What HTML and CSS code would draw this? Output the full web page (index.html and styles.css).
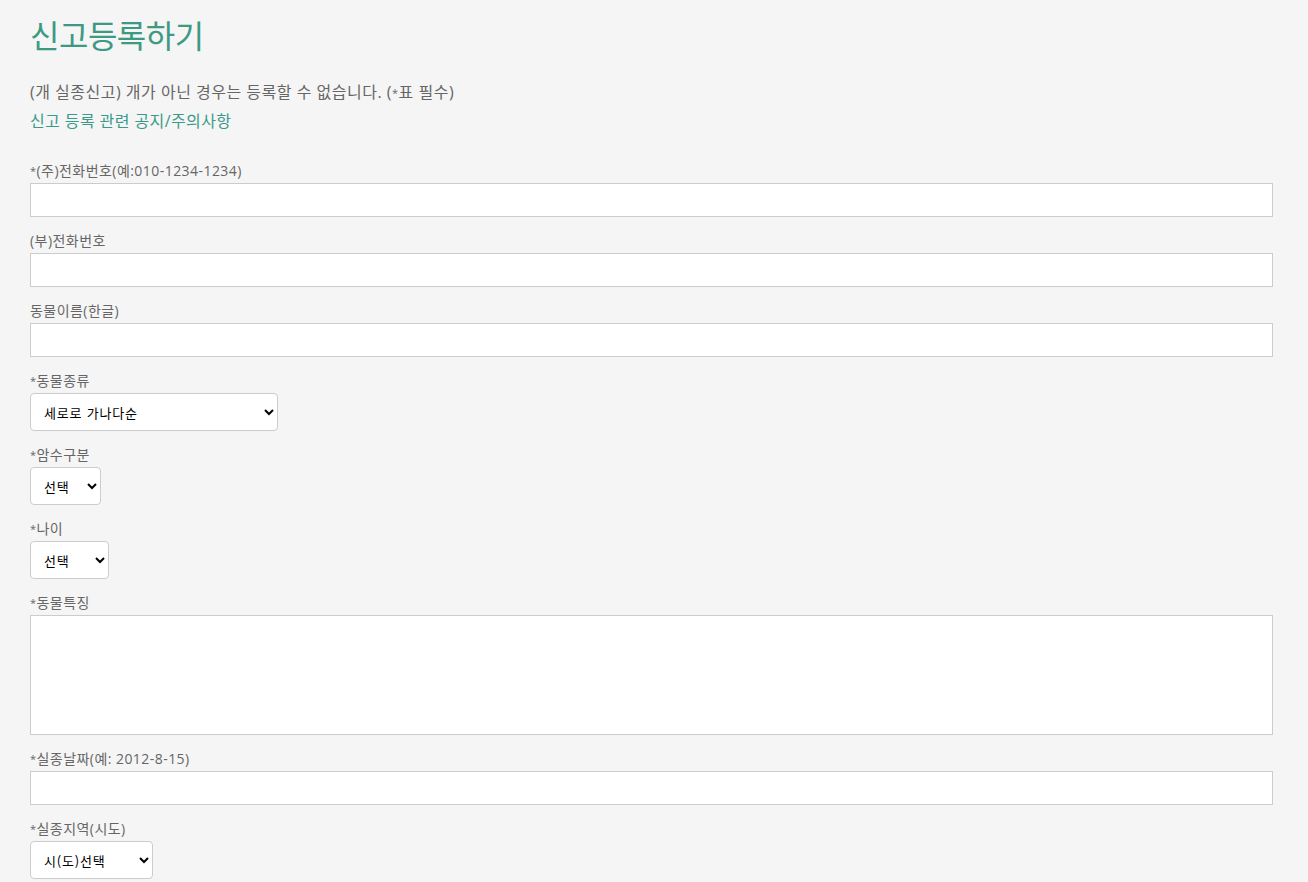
FILE: index.html
```html
<!DOCTYPE html>
<html lang="ko">
<head>
    <meta charset="UTF-8">
    <meta name="viewport" content="width=device-width, initial-scale=1.0">
    <title>신고등록하기</title>
    <link rel="stylesheet" href="styles.css">
</head>
<body>
    <div class="wrap">
        <h1>신고등록하기</h1>
        <p class="notice">(개 실종신고) 개가 아닌 경우는 등록할 수 없습니다. (<span class="star">*</span>표 필수)</p>
        <a class="link" href="#">신고 등록 관련 공지/주의사항</a>

        <form class="form">
            <div class="field">
                <label><span class="star">*</span>(주)전화번호(예:010-1234-1234)</label>
                <input type="text" class="text">
            </div>
            <div class="field">
                <label>(부)전화번호</label>
                <input type="text" class="text">
            </div>
            <div class="field">
                <label>동물이름(한글)</label>
                <input type="text" class="text">
            </div>
            <div class="field">
                <label><span class="star">*</span>동물종류</label>
                <select class="sel sel-kind">
                    <option>세로로 가나다순</option>
                </select>
            </div>
            <div class="field">
                <label><span class="star">*</span>암수구분</label>
                <select class="sel sel-sex">
                    <option>선택</option>
                </select>
            </div>
            <div class="field">
                <label><span class="star">*</span>나이</label>
                <select class="sel sel-age">
                    <option>선택</option>
                </select>
            </div>
            <div class="field">
                <label><span class="star">*</span>동물특징</label>
                <textarea class="area"></textarea>
            </div>
            <div class="field">
                <label><span class="star">*</span>실종날짜(예: 2012-8-15)</label>
                <input type="text" class="text">
            </div>
            <div class="field">
                <label><span class="star">*</span>실종지역(시도)</label>
                <select class="sel sel-area">
                    <option>시(도)선택</option>
                </select>
            </div>
        </form>
    </div>
</body>
</html>
```

FILE: styles.css
```css
* {
    margin: 0;
    padding: 0;
    box-sizing: border-box;
}
body {
    background-color: #f5f5f5;
    font-family: "Open Sans", "Noto Sans CJK KR", sans-serif;
    color: #666;
}
.wrap {
    padding: 14px 35px 0 30px;
}
h1 {
    font-size: 32px;
    font-weight: 400;
    color: #3d9a82;
    line-height: 44px;
    letter-spacing: -0.5px;
}
.notice {
    margin-top: 23px;
    font-size: 16px;
    line-height: 22px;
    letter-spacing: 0.5px;
}
.link {
    display: inline-block;
    margin-top: 6px;
    font-size: 16px;
    line-height: 22px;
    letter-spacing: 0.4px;
    color: #3a9a8a;
    text-decoration: none;
}
.star {
    font-size: 11px;
    vertical-align: 1px;
}
.form {
    margin-top: 28px;
}
.field {
    display: flex;
    flex-direction: column;
    align-items: flex-start;
    margin-bottom: 13px;
}
.field label {
    font-size: 14px;
    line-height: 21px;
    letter-spacing: 0.45px;
    margin-bottom: 2px;
}
.text {
    width: 100%;
    height: 34px;
    border: 1px solid #ccc;
    background-color: #fff;
    outline: none;
}
.area {
    width: 100%;
    height: 120px;
    border: 1px solid #ccc;
    background-color: #fff;
    resize: none;
}
.sel {
    height: 38px;
    border: 1px solid #ccc;
    border-radius: 4px;
    background-color: #fff;
    font-family: "Noto Sans CJK KR", sans-serif;
    font-size: 13px;
    letter-spacing: 0.8px;
    color: #000;
    padding-left: 9px;
}
.sel-kind { width: 248px; }
.sel-sex { width: 71px; }
.sel-age { width: 79px; }
.sel-area { width: 123px; }
```
